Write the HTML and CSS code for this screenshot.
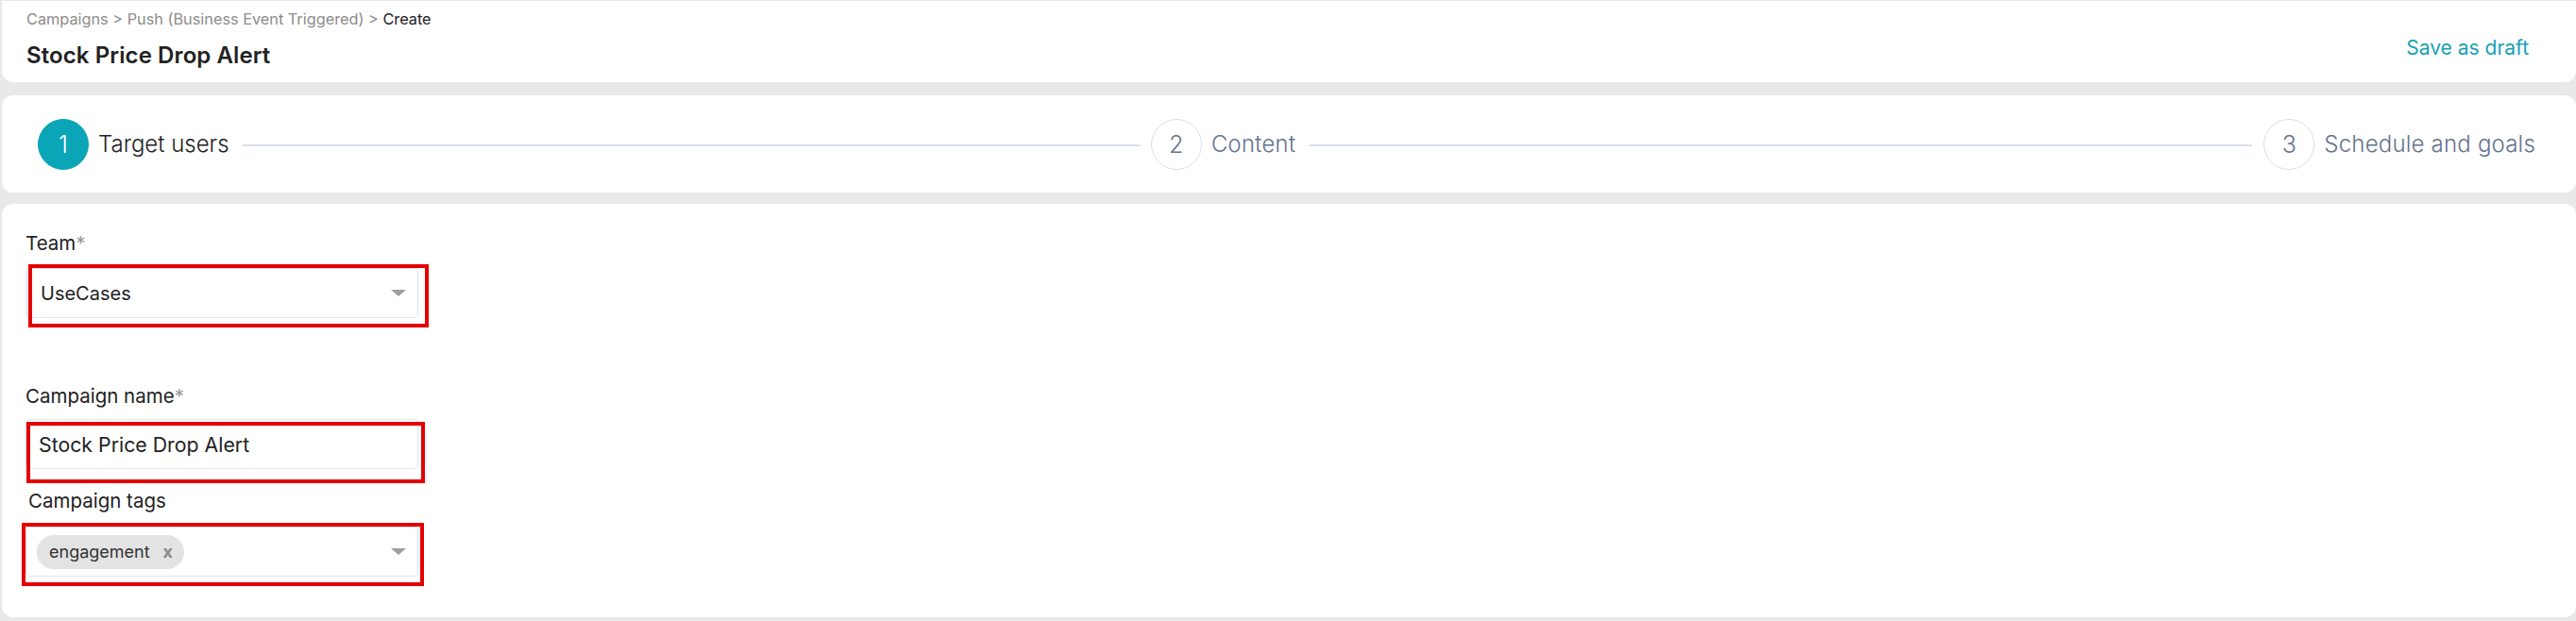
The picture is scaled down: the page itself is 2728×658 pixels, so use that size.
FILE: index.html
```html
<!DOCTYPE html>
<html lang="en">
<head>
  <meta charset="UTF-8">
  <title>Create campaign - Push (Business Event Triggered)</title>
  <link rel="stylesheet" href="styles.css">
</head>
<body>
  <!-- Page header: breadcrumb, title and draft action -->
  <header class="page-header">
    <div class="page-header-text">
      <div class="breadcrumb">
        <a href="#">Campaigns</a> <span class="sep">&gt;</span>
        <a href="#">Push (Business Event Triggered)</a> <span class="sep">&gt;</span>
        <span class="current">Create</span>
      </div>
      <h1>Stock Price Drop Alert</h1>
    </div>
    <a href="#" class="save-draft">Save as draft</a>
  </header>

  <!-- Wizard steps: each step but the last carries its own connector line -->
  <div class="stepper">
    <div class="step active">
      <span class="step-num">1</span>
      <span class="step-label">Target users</span>
      <span class="step-line"></span>
    </div>
    <div class="step">
      <span class="step-num">2</span>
      <span class="step-label">Content</span>
      <span class="step-line"></span>
    </div>
    <div class="step last">
      <span class="step-num">3</span>
      <span class="step-label">Schedule and goals</span>
    </div>
  </div>

  <!-- Step 1 form -->
  <main class="form-card">
    <div class="field field-team">
      <label>Team<span class="req">*</span></label>
      <div class="control select">
        <span class="value">UseCases</span>
        <span class="caret"></span>
        <span class="mark mark-team"></span>
      </div>
    </div>

    <div class="field field-name">
      <label>Campaign name<span class="req">*</span></label>
      <div class="control input">
        <span class="value">Stock Price Drop Alert</span>
        <span class="mark mark-name"></span>
      </div>
    </div>

    <div class="field field-tags">
      <label>Campaign tags</label>
      <div class="control select tags">
        <span class="chip">engagement <span class="chip-x">x</span></span>
        <span class="caret"></span>
        <span class="mark mark-tags"></span>
      </div>
    </div>
  </main>
</body>
</html>
```

FILE: styles.css
```css
/* Global */
body {
  font-family: Inter, "Liberation Sans", sans-serif;
  margin: 0;
  padding: 1px 0 0 2px;
  background-color: #e9e9e9;
  color: #222;
}
a {
  text-decoration: none;
}

/* Header */
.page-header {
  background-color: #fff;
  height: 86px;
  border-radius: 0 0 12px 12px;
  padding: 0 50px 0 26px;
  display: flex;
  align-items: center;
  justify-content: space-between;
  box-sizing: border-box;
}
.breadcrumb {
  font-size: 16.3px;
  color: #8c8c8c;
  margin-top: -6px;
}
.breadcrumb a {
  color: #8c8c8c;
}
.breadcrumb .current {
  color: #222;
}
.page-header h1 {
  margin: 14px 0 0 0;
  font-size: 24px;
  font-weight: 600;
  letter-spacing: 0.1px;
}
.save-draft {
  color: #17a2b2;
  font-size: 21px;
  margin-top: 12px;
}

/* Stepper */
.stepper {
  background-color: #fff;
  margin-top: 14px;
  height: 103px;
  border-radius: 12px;
  padding: 0 43px 0 38px;
  display: flex;
  align-items: center;
  box-sizing: border-box;
}
.step {
  flex: 1;
  display: flex;
  align-items: center;
}
.step.last {
  flex: none;
}
.step-num {
  flex: none;
  width: 54px;
  height: 54px;
  border-radius: 50%;
  border: 1px solid #d9deef;
  box-sizing: border-box;
  display: flex;
  align-items: center;
  justify-content: center;
  font-size: 25px;
  font-weight: 300;
  color: #64728f;
}
.step-label {
  margin-left: 10px;
  font-size: 24px;
  font-weight: 300;
  color: #64728f;
  letter-spacing: 0.2px;
}
.step.active .step-num {
  background-color: #0aa6b7;
  border-color: #0aa6b7;
  color: #fff;
}
.step.active .step-label {
  color: #222;
  letter-spacing: 0;
}
.step-line {
  flex: 1;
  height: 2px;
  background-color: #dadfec;
  margin: 2px 12px 0 14px;
}

/* Form */
.form-card {
  background-color: #fff;
  margin-top: 12px;
  height: 438px;
  border-radius: 12px;
  padding: 30px 25px 0 25px;
  box-sizing: border-box;
}
.field label {
  display: block;
  font-size: 20.5px;
  line-height: 24px;
  margin-bottom: 14px;
}
.field .req {
  color: #999;
}
.field-team {
  margin-bottom: 71px;
}
.field-name label {
  margin-bottom: 12px;
}
.field-name {
  margin-bottom: 22px;
}
.field-tags label {
  margin-left: 3px;
  margin-bottom: 15px;
}
.control {
  position: relative;
  width: 416px;
  height: 53px;
  border: 1px solid #dfe3ef;
  border-radius: 5px;
  box-sizing: border-box;
  display: flex;
  align-items: center;
  padding: 0 12px 0 15px;
  font-size: 20px;
}
.control .value {
  flex: 1;
}
.input {
  padding-left: 13px;
  font-size: 21.3px;
}
.caret {
  width: 0;
  height: 0;
  border-left: 8px solid transparent;
  border-right: 8px solid transparent;
  border-top: 7px solid #9e9e9e;
}
.tags {
  padding-left: 11px;
  justify-content: space-between;
}
.chip {
  display: inline-flex;
  align-items: center;
  height: 36px;
  padding: 0 12px 0 13px;
  border-radius: 18px;
  background-color: #e3e3e3;
  font-size: 18px;
  color: #333;
}
.chip-x {
  margin-left: 14px;
  font-weight: 700;
  color: #8a8a8a;
  font-size: 18px;
}

/* Red highlight frames drawn over the fields */
.mark {
  position: absolute;
  border: 4px solid #e50000;
  pointer-events: none;
}
.mark-team {
  left: 2px;
  right: -12px;
  top: -5px;
  bottom: -11px;
}
.mark-name {
  left: 0;
  right: -8px;
  top: 2px;
  bottom: -16px;
}
.mark-tags {
  left: -5px;
  right: -7px;
  top: -5px;
  bottom: -11px;
}
```
